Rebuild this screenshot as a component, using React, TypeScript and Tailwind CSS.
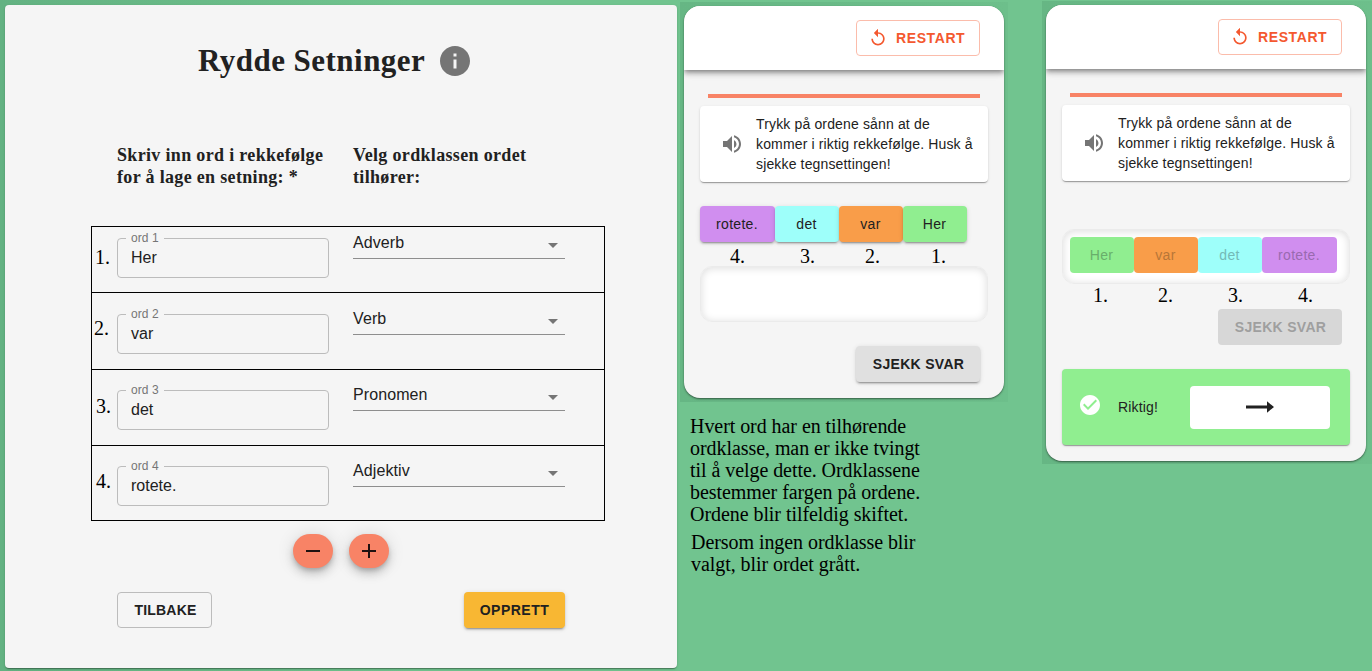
import type { ReactNode } from "react";
import {
  MdAdd,
  MdArrowDropDown,
  MdCheckCircle,
  MdInfo,
  MdRemove,
  MdReplay,
  MdVolumeUp,
} from "react-icons/md";

const SERIF = "font-['Liberation_Serif',serif]";
const RAISED =
  "shadow-[0px_3px_1px_-2px_rgba(0,0,0,0.2),0px_2px_2px_0px_rgba(0,0,0,0.14),0px_1px_5px_0px_rgba(0,0,0,0.12)]";
const PAPER =
  "shadow-[0px_2px_1px_-1px_rgba(0,0,0,0.2),0px_1px_1px_0px_rgba(0,0,0,0.14),0px_1px_3px_0px_rgba(0,0,0,0.12)]";
const FAB =
  "shadow-[0px_3px_5px_-1px_rgba(0,0,0,0.2),0px_6px_10px_0px_rgba(0,0,0,0.14),0px_1px_18px_0px_rgba(0,0,0,0.12)]";

const rows = [
  { word: "Her", type: "Adverb", row: "h-[66px] pt-[11px]", num: "pl-[3px] pt-2" },
  { word: "var", type: "Verb", row: "h-[77px] pt-[21px]", num: "pl-0.5 pt-[3px]" },
  { word: "det", type: "Pronomen", row: "h-[76px] pt-5", num: "pl-1 pt-[5px]" },
  { word: "rotete.", type: "Adjektiv", row: "h-[74px] pt-5", num: "pl-1 pt-1" },
];

function Editor() {
  return (
    <section className={`mt-[5px] ml-[5px] flex h-[663px] w-[672px] shrink-0 flex-col rounded bg-[#f5f5f5] ${PAPER}`}>
      <div className="flex h-[112px] items-center pl-[193px]">
        <h1 className={`${SERIF} w-[239px] text-[31px] font-bold tracking-[0.47px] whitespace-nowrap text-[#212121]`}>
          Rydde Setninger
        </h1>
        <MdInfo className="size-9 text-[#757575]" />
      </div>
      <div className={`${SERIF} flex h-[109px] pt-[27px] pl-28 text-[18px] leading-[22px] font-bold tracking-[0.33px] whitespace-nowrap text-[#212121]`}>
        <div className="w-[236px]">
          Skriv inn ord i rekkefølge
          <br />
          for å lage en setning: *
        </div>
        <div>
          Velg ordklassen ordet
          <br />
          tilhører:
        </div>
      </div>
      <div className="ml-[86px] w-[514px] border border-black">
        {rows.map((r, i) => (
          <div key={r.word} className={`flex border-b border-black last:border-b-0 ${r.row}`}>
            <div className={`${SERIF} w-[25px] text-[20px] leading-[22px] text-black ${r.num}`}>{i + 1}.</div>
            <div className="relative h-10 w-[212px] rounded border border-[#bcbcbc] px-[13px] pt-2 text-base leading-[22px] text-[#212121]">
              <span className="absolute -top-[9px] left-2 bg-[#f5f5f5] px-[5px] text-xs leading-4 tracking-[0.1px] text-[#757575]">
                ord {i + 1}
              </span>
              {r.word}
            </div>
            <div className="ml-6 flex h-[21px] w-[212px] items-center justify-between border-b border-[#8e8e8e] text-base tracking-[0.1px] text-[#212121]">
              <span className="-translate-y-[5px]">{r.type}</span>
              <MdArrowDropDown className="size-6 -translate-y-[3px] text-[#757575]" />
            </div>
          </div>
        ))}
      </div>
      <div className="mt-[13px] ml-72 flex gap-4">
        <button className={`flex h-[34px] w-10 items-center justify-center rounded-[18px] bg-[#f88366] text-[#1f1110] ${FAB}`}>
          <MdRemove className="size-6" />
        </button>
        <button className={`flex h-[34px] w-10 items-center justify-center rounded-[18px] bg-[#f88366] text-[#1f1110] ${FAB}`}>
          <MdAdd className="size-6" />
        </button>
      </div>
      <div className="mt-6 ml-28 flex w-[448px] justify-between text-sm font-bold text-[#212121]">
        <button className="h-9 w-[95px] rounded border border-[#bcbcbc] pl-0.5 tracking-[0.2px]">TILBAKE</button>
        <button className={`h-9 w-[101px] rounded bg-[#f8b733] tracking-[0.5px] ${RAISED}`}>OPPRETT</button>
      </div>
    </section>
  );
}

function Phone({ children, height }: { children: ReactNode; height: string }) {
  return (
    <div className="overflow-hidden bg-linear-to-r from-[#66b684] to-[#6dbf8b] pt-1 pl-1">
      <div className={`w-80 overflow-hidden rounded-[16px] bg-[#f5f5f5] shadow-[0px_1px_2px_rgba(0,0,0,0.5)] ${height}`}>
        <div className="flex h-16 items-center justify-end bg-white pr-6 shadow-[0px_2px_4px_-1px_rgba(0,0,0,0.3),0px_4px_5px_0px_rgba(0,0,0,0.2),0px_1px_10px_0px_rgba(0,0,0,0.12)]">
          <button className="flex h-9 w-[124px] items-center rounded border border-[#fbbcab] pl-[11px] text-sm font-bold tracking-[0.6px] text-[#f4582f]">
            <MdReplay className="mr-2 size-5" />
            RESTART
          </button>
        </div>
        <div className="px-4 pt-6">
          <div className="mx-2 h-1 bg-[#f88366]" />
          <div className={`mt-2 flex h-[76px] items-center rounded bg-white pl-5 ${PAPER}`}>
            <MdVolumeUp className="mr-3 size-6 text-[#757575]" />
            <p className="text-sm leading-5 tracking-[0.15px] whitespace-nowrap text-[#212121]">
              Trykk på ordene sånn at de
              <br />
              kommer i riktig rekkefølge. Husk å
              <br />
              sjekke tegnsettingen!
            </p>
          </div>
          {children}
        </div>
      </div>
    </div>
  );
}

function Chip({ className, children }: { className: string; children: ReactNode }) {
  return (
    <div className={`flex h-9 items-center justify-center rounded pr-px text-sm tracking-[0.3px] ${className}`}>
      {children}
    </div>
  );
}

const WELL =
  "rounded-[12px] border border-[#ebebeb] bg-white shadow-[inset_0px_1px_8px_rgba(0,0,0,0.14)]";
const NUMBERS = `${SERIF} flex text-[20px] leading-[22px] text-black`;

export default function App() {
  return (
    <main className="flex h-[671px] w-[1372px] overflow-hidden bg-[#71c48f] font-['Liberation_Sans',sans-serif]">
      <div className="w-[680px] shrink-0 bg-linear-to-r from-[#63b282] via-[#69ba87] via-30% to-[#71c48f] to-60%">
        <Editor />
      </div>

      <div className="w-[328px] shrink-0 pt-0.5">
        <div className="h-[400px] overflow-hidden">
          <Phone height="h-[392px] mb-1">
            <div className="mt-6 flex text-[#212121]">
              <Chip className={`w-[75px] bg-[#d08eef] ${RAISED}`}>rotete.</Chip>
              <Chip className={`w-16 bg-[#9efffa] ${RAISED}`}>det</Chip>
              <Chip className={`w-16 bg-[#f99d49] ${RAISED}`}>var</Chip>
              <Chip className={`w-16 bg-[#90ee90] ${RAISED}`}>Her</Chip>
            </div>
            <div className={`${NUMBERS} h-6 pt-[3px] pl-[30px]`}>
              <span className="w-[70px]">4.</span>
              <span className="w-[65px]">3.</span>
              <span className="w-[66px]">2.</span>
              <span>1.</span>
            </div>
            <div className={`${WELL} h-14`} />
            <div className="mt-6 flex justify-end pr-2">
              <button className={`h-9 w-[124px] rounded bg-[#e0e0e0] pl-px text-sm font-bold tracking-[0.3px] text-[#212121] ${RAISED}`}>
                SJEKK SVAR
              </button>
            </div>
          </Phone>
        </div>
        <div className={`${SERIF} pt-[13px] pl-[10px] text-[20px] leading-[22px] tracking-[-0.06px] whitespace-nowrap text-black`}>
          <p>
            Hvert ord har en tilhørende
            <br />
            ordklasse, man er ikke tvingt
            <br />
            til å velge dette. Ordklassene
            <br />
            bestemmer fargen på ordene.
            <br />
            Ordene blir tilfeldig skiftet.
          </p>
          <p className="mt-1.5 ml-px">
            Dersom ingen ordklasse blir
            <br />
            valgt, blir ordet grått.
          </p>
        </div>
      </div>

      <div className="ml-[34px] w-[330px] shrink-0 pt-px">
        <Phone height="h-[456px] mb-[3px]">
          <div className={`${WELL} mt-12 flex h-[55px] pt-[7px] pl-[7px]`}>
            <Chip className="w-16 bg-[#90ee90] text-[#69ae6b]">Her</Chip>
            <Chip className="w-16 bg-[#f99d49] text-[#b77638]">var</Chip>
            <Chip className="w-16 bg-[#9efffa] text-[#74bab7]">det</Chip>
            <Chip className="w-[75px] bg-[#d08eef] text-[#996aaf]">rotete.</Chip>
          </div>
          <div className={`${NUMBERS} h-[25px] pl-[31px]`}>
            <span className="w-[65px]">1.</span>
            <span className="w-[70px]">2.</span>
            <span className="w-[70px]">3.</span>
            <span>4.</span>
          </div>
          <div className="flex justify-end pr-2">
            <button className="h-9 w-[124px] rounded bg-[#d7d7d7] pl-px text-sm font-bold tracking-[0.3px] text-[#9f9f9f]">
              SJEKK SVAR
            </button>
          </div>
          <div className={`mt-6 flex h-[76px] items-center rounded bg-[#90ee90] pl-4 text-sm text-[#212121] ${PAPER}`}>
            <MdCheckCircle className="size-6 -translate-y-0.5 text-white" />
            <span className="w-[72px] pl-4 tracking-[0.15px]">Riktig!</span>
            <button className="ml-4 flex h-[43px] w-[140px] items-center justify-center rounded bg-white">
              <svg viewBox="0 0 24 24" preserveAspectRatio="none" className="h-[34px] w-[42px]" fill="#212121">
                <path d="M16.01 11H4v2h12.01v3L20 12l-3.99-4z" />
              </svg>
            </button>
          </div>
        </Phone>
      </div>
    </main>
  );
}
